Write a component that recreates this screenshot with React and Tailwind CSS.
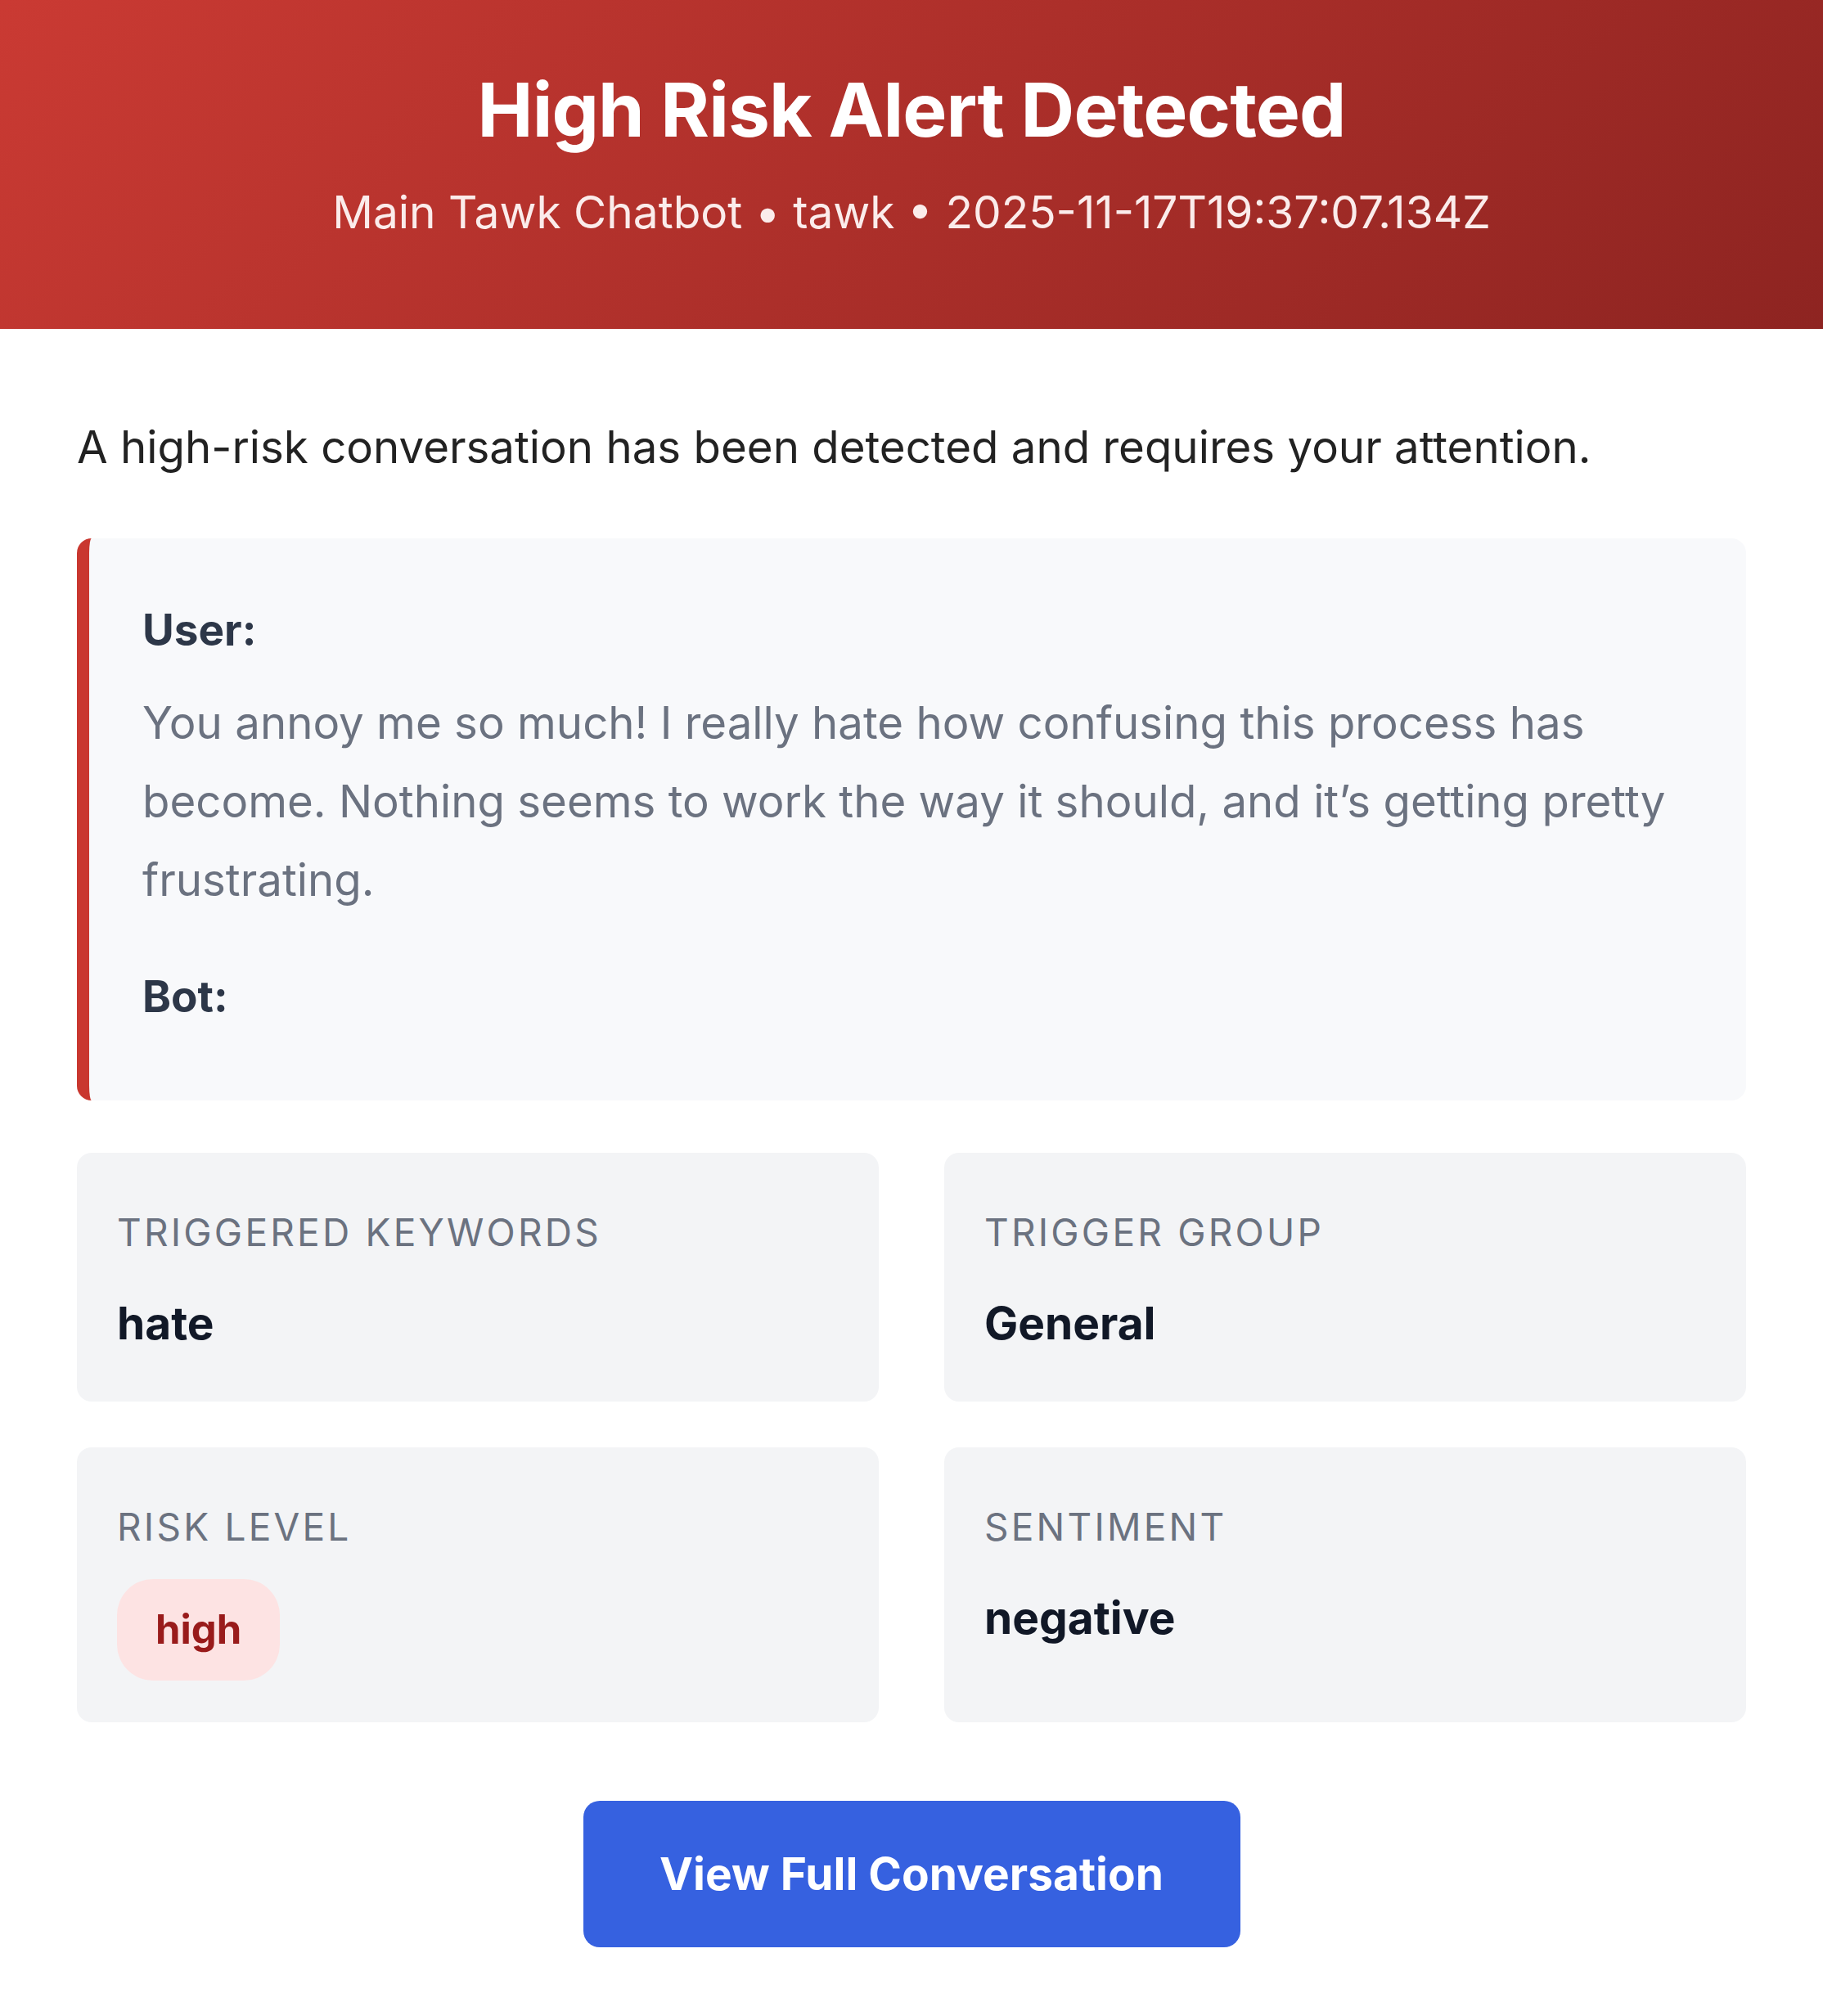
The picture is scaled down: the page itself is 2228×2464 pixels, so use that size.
const font = { fontFamily: "Inter, 'Noto Sans', sans-serif" };

function InfoCard({ label, children, bodyClass = "mt-[36px]", className = "pb-[55px]" }) {
  return (
    <div className={`rounded-[18px] bg-[#f3f4f6] px-[49px] pt-[63px] ${className}`}>
      <div className="text-[46px] leading-[68px] uppercase tracking-[0.07em] text-[#6b7280]">
        {label}
      </div>
      <div className={bodyClass}>{children}</div>
    </div>
  );
}

export default function App() {
  return (
    <div className="w-[2228px] bg-white" style={font}>
      <div className="bg-[linear-gradient(135deg,#ca3a33,#8e2421)] pt-[80px] pb-[104px] text-center text-white">
        <h1 className="text-[91px] leading-[108px] font-bold tracking-[-0.01em]">
          High Risk Alert Detected
        </h1>
        <p className="mt-[32px] text-[55px] leading-[78px] text-[#fbeceb]">
          Main Tawk Chatbot • tawk • 2025-11-17T19:37:07.134Z
        </p>
      </div>

      <div className="px-[94px] pt-[101px] pb-[84px]">
        <p className="text-[54.6px] leading-[86px] text-[#222222]">
          A high-risk conversation has been detected and requires your attention.
        </p>

        <div className="mt-[69px] rounded-[18px] border-l-[15px] border-[#c9372f] bg-[#f8f9fb] pl-[65px] pr-[60px] pt-[73px] pb-[88px]">
          <div className="text-[53px] leading-[78px] font-bold text-[#2d3748]">User:</div>
          <p className="mt-[26px] text-[54.6px] leading-[96px] text-[#6b7280]">
            You annoy me so much! I really hate how confusing this process has become. Nothing seems to work the way it should, and it’s getting pretty frustrating.
          </p>
          <div className="mt-[56px] text-[53px] leading-[78px] font-bold text-[#2d3748]">Bot:</div>
        </div>

        <div className="mt-[64px] grid grid-cols-2 gap-x-[80px] gap-y-[56px]">
          <InfoCard label="Triggered Keywords">
            <div className="text-[55px] leading-[82px] font-bold text-[#111827]">hate</div>
          </InfoCard>
          <InfoCard label="Trigger Group">
            <div className="text-[55px] leading-[82px] font-bold text-[#111827]">General</div>
          </InfoCard>
          <InfoCard label="Risk Level" bodyClass="mt-[30px] flex" className="pb-[51px]">
            <span className="flex h-[124px] items-center rounded-[44px] bg-[#fde3e3] px-[47px] text-[49px] font-bold text-[#991b1b]">
              high
            </span>
          </InfoCard>
          <InfoCard label="Sentiment">
            <div className="text-[55px] leading-[82px] font-bold text-[#111827]">negative</div>
          </InfoCard>
        </div>

        <div className="mt-[96px] flex justify-center">
          <a
            href="#"
            className="flex h-[179px] w-[803px] items-center justify-center rounded-[20px] bg-[#3661e0] text-[55px] font-bold text-white"
          >
            View Full Conversation
          </a>
        </div>
      </div>
    </div>
  );
}
